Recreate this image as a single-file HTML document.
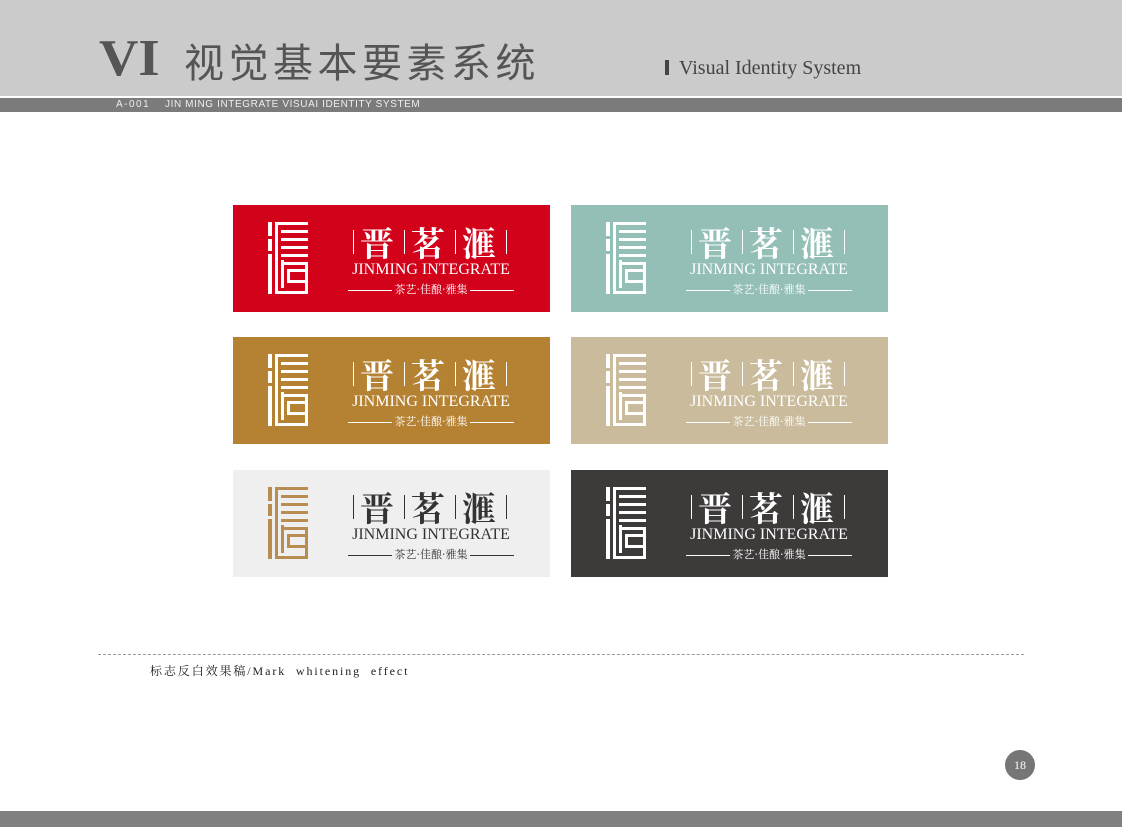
<!DOCTYPE html>
<html><head><meta charset="utf-8"><style>
body{margin:0;width:1122px;height:827px;position:relative;background:#fff;overflow:hidden;font-family:"Liberation Serif","Noto Serif CJK SC",serif}
.hdr{position:absolute;left:0;top:0;width:1122px;height:96px;background:#cbcbcb}
.bar{position:absolute;left:0;top:98px;width:1122px;height:14px;background:#7b7b7b}
.bar span{position:absolute;top:0;font:10px/14px "Liberation Sans",sans-serif;color:#eee;letter-spacing:0.6px}
.vi{position:absolute;left:99px;top:31px;font:bold 52px/56px "Liberation Serif",serif;color:#555;transform:scaleX(1.05);transform-origin:left}
.cn{position:absolute;left:184px;top:35px;font:40px/50px "Noto Sans CJK SC",sans-serif;color:#555;letter-spacing:4.5px}
.vis{position:absolute;left:665px;top:56px;font:20px/24px "Liberation Serif",serif;color:#444}
.vis:before{content:"";display:inline-block;width:4px;height:15px;background:#444;margin-right:10px;vertical-align:-1px}
.card{position:absolute;width:317px;height:107px}
.em{position:absolute;left:35px;top:17px}
.ch{position:absolute;top:17px;font:bold 34px/40px "Noto Serif CJK SC",serif}
.sep{position:absolute;top:25px;width:1px;height:24px}
.en{position:absolute;left:112px;top:56px;width:172px;text-align:center;font:16px/18px "Liberation Serif",serif;white-space:nowrap;letter-spacing:0}
.tg{position:absolute;left:115px;top:77px;width:166px;text-align:center;font:11px/14px "Noto Serif CJK SC",serif}
.ln{position:absolute;top:85px;width:44px;height:1px}
.dash{position:absolute;left:98px;top:654px;width:926px;border-top:1px dashed #999}
.cap{position:absolute;left:150px;top:662px;font:12px/18px "Liberation Serif","Noto Serif CJK SC",serif;color:#222;letter-spacing:1.9px}
.pg{position:absolute;left:1005px;top:750px;width:30px;height:30px;border-radius:50%;background:#767676;color:#fff;font:12px/30px "Liberation Serif",serif;text-align:center}
.foot{position:absolute;left:0;top:811px;width:1122px;height:16px;background:#808080}
</style></head><body>
<div class="hdr"></div>
<div class="vi">VI</div><div class="cn">视觉基本要素系统</div>
<div class="vis">Visual Identity System</div>
<div class="bar"><span style="left:116px;letter-spacing:1.5px">A-001</span><span style="left:165px">JIN MING INTEGRATE VISUAI IDENTITY SYSTEM</span></div>

<svg width="0" height="0" style="position:absolute"><defs><g id="e">
<rect x="0" y="0" width="4" height="14"/><rect x="0" y="17" width="4" height="12"/><rect x="0" y="32" width="4" height="40"/>
<rect x="7" y="0" width="3" height="72"/><rect x="7" y="0" width="33" height="3"/>
<rect x="13" y="8" width="27" height="3"/><rect x="13" y="16" width="27" height="3"/><rect x="13" y="24" width="27" height="3"/><rect x="13" y="32" width="27" height="3"/>
<rect x="13" y="38" width="3" height="28"/><rect x="13" y="40" width="27" height="3"/>
<rect x="19" y="47" width="21" height="3"/><rect x="19" y="47" width="3" height="14"/><rect x="19" y="58" width="21" height="3"/>
<rect x="7" y="69" width="33" height="3"/><rect x="37" y="40" width="3" height="32"/>
</g></defs></svg>

<div class="card" style="left:233px;top:205px;background:#d2021a;color:#fff"></div>
<div class="card" style="left:571px;top:205px;background:#93bfb7;color:#fff"></div>
<div class="card" style="left:233px;top:337px;background:#b58234;color:#fff"></div>
<div class="card" style="left:571px;top:337px;background:#c9bb9b;color:#fff"></div>
<div class="card" style="left:233px;top:470px;background:#efefef;color:#333"></div>
<div class="card" style="left:571px;top:470px;background:#3d3a3a;color:#fff"></div>

<script>
document.querySelectorAll('.card').forEach(function(c,i){
 var col=c.style.color, em=(i==4)?'#b98d52':col;
 c.innerHTML='<svg class="em" width="40" height="72" fill="'+em+'"><use href="#e"/></svg>'+
 '<div class="sep" style="left:120px;background:'+col+'"></div><div class="sep" style="left:171px;background:'+col+'"></div><div class="sep" style="left:222px;background:'+col+'"></div><div class="sep" style="left:273px;background:'+col+'"></div>'+
 '<div class="ch" style="left:127px">晋</div><div class="ch" style="left:178px">茗</div><div class="ch" style="left:229px">滙</div>'+
 '<div class="en">JINMING INTEGRATE</div>'+
 '<div class="ln" style="left:115px;background:'+col+'"></div><div class="ln" style="left:237px;background:'+col+'"></div>'+
 '<div class="tg">茶艺·佳酿·雅集</div>';
});
</script>

<div class="dash"></div>
<div class="cap">标志反白效果稿/Mark&nbsp; whitening&nbsp; effect</div>
<div class="pg">18</div>
<div class="foot"></div>
</body></html>
